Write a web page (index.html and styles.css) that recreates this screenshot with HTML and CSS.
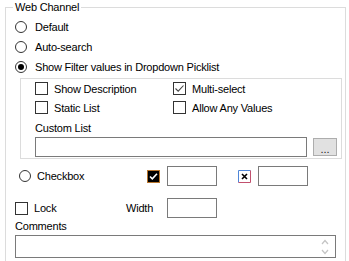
FILE: index.html
```html
<!DOCTYPE html>
<html lang="en">
<head>
    <meta charset="UTF-8">
    <meta name="viewport" content="width=device-width, initial-scale=1.0">
    <title>Web Channel</title>
    <link rel="stylesheet" href="styles.css">
</head>
<body>
    <fieldset class="group">
        <legend>Web Channel</legend>
        <label class="opt"><span class="radio"></span>Default</label>
        <label class="opt"><span class="radio"></span>Auto-search</label>
        <label class="opt"><span class="radio on"></span>Show Filter values in Dropdown Picklist</label>

        <div class="picklist">
            <div class="grid">
                <label class="opt"><span class="check"></span>Show Description</label>
                <label class="opt"><span class="check">
                    <svg width="11" height="11" viewBox="0 0 11 11"><path d="M1.5 5.5 L4.2 8.2 L9.5 2.5" fill="none" stroke="#444" stroke-width="1.1"/></svg>
                </span>Multi-select</label>
                <label class="opt"><span class="check"></span>Static List</label>
                <label class="opt"><span class="check"></span>Allow Any Values</label>
            </div>
            <div class="caption">Custom List</div>
            <div class="custom">
                <div class="field long"></div>
                <button class="browse">...</button>
            </div>
        </div>

        <div class="cb-row">
            <label class="opt"><span class="radio"></span>Checkbox</label>
            <svg class="swatch" width="13" height="13" viewBox="0 0 13 13">
                <rect x="0.5" y="0.5" width="12" height="12" fill="#000" stroke="#b8762e"/>
                <path d="M3 6.5 L5.3 8.8 L10 3.8" fill="none" stroke="#fff" stroke-width="1.6"/>
            </svg>
            <div class="field short"></div>
            <svg class="swatch cross" width="13" height="13" viewBox="0 0 13 13">
                <rect x="0" y="0" width="13" height="13" fill="#fff"/>
                <path d="M0.5 12.5 V0.5 H12.5" fill="none" stroke="#4f86d8"/>
                <path d="M12.5 0.5 V12.5 H0.5" fill="none" stroke="#c2506e"/>
                <path d="M4 4 L9 9 M9 4 L4 9" stroke="#000" stroke-width="1.6"/>
            </svg>
            <div class="field short"></div>
        </div>

        <div class="lock-row">
            <label class="opt"><span class="check"></span>Lock</label>
            <span class="width-label">Width</span>
            <div class="field short"></div>
        </div>

        <div class="caption comments">Comments</div>
        <div class="memo">
            <svg width="8" height="21" viewBox="0 0 8 21">
                <path d="M1 8 L4 4.5 L7 8" fill="none" stroke="#c4c4c4" stroke-width="1.2"/>
                <path d="M1 14 L4 17.5 L7 14" fill="none" stroke="#c4c4c4" stroke-width="1.2"/>
            </svg>
        </div>
    </fieldset>
</body>
</html>
```

FILE: styles.css
```css
* {
    box-sizing: border-box;
}
body {
    margin: 0;
    font-family: "Liberation Sans", Arial, sans-serif;
    font-size: 11px;
    line-height: 14px;
    letter-spacing: -0.2px;
    color: #000;
    background: #fff;
}
.group {
    margin: 0 0 0 5px;
    width: 341px;
    min-width: 0;
    padding: 3px 3px 20px 9px;
    border: 1px solid #dcdcdc;
}
.group legend {
    padding: 0 2px;
    margin-left: -2px;
    line-height: 14px;
}
.opt {
    display: flex;
    align-items: center;
    height: 20px;
    white-space: nowrap;
}
.radio {
    flex: none;
    display: flex;
    align-items: center;
    justify-content: center;
    width: 12px;
    height: 12px;
    margin-right: 8px;
    border: 1px solid #333;
    border-radius: 50%;
    background: #fff;
}
.radio.on::after {
    content: "";
    width: 6px;
    height: 6px;
    border-radius: 50%;
    background: #000;
}
.check {
    flex: none;
    display: flex;
    width: 13px;
    height: 13px;
    margin-right: 6px;
    border: 1px solid #333;
    background: #fff;
}
.picklist {
    margin: 1px 0 0 5px;
    padding: 0 0 1px 14px;
    border: 1px solid #dcdcdc;
}
.grid {
    display: grid;
    grid-template-columns: 138px auto;
    grid-auto-rows: 19px;
}
.grid .opt {
    height: 19px;
}
.caption {
    margin-top: 4px;
}
.custom {
    display: flex;
    align-items: center;
    margin-top: 2px;
}
.field {
    flex: none;
    height: 20px;
    border: 1px solid #7a7a7a;
    background: #fff;
}
.field.long {
    width: 272px;
}
.field.short {
    width: 50px;
}
.browse {
    width: 24px;
    height: 18px;
    margin-left: 6px;
    padding: 3px 0 0;
    border: 1px solid #adadad;
    background: #e1e1e1;
    font: inherit;
    line-height: 12px;
    color: #222;
}
.cb-row {
    display: flex;
    align-items: center;
    height: 20px;
    margin-top: 7px;
}
.cb-row .opt {
    width: 132px;
    padding-left: 4px;
}
.cb-row .radio {
    margin-right: 6px;
}
.swatch {
    flex: none;
    margin-right: 7px;
}
.swatch.cross {
    margin-left: 21px;
}
.lock-row {
    display: flex;
    align-items: center;
    height: 20px;
    margin-top: 12px;
}
.lock-row .opt {
    width: 111px;
}
.width-label {
    width: 41px;
}
.comments {
    margin-top: 1px;
}
.memo {
    display: flex;
    justify-content: flex-end;
    align-items: flex-start;
    width: 321px;
    height: 23px;
    margin-top: 2px;
    padding-right: 6px;
    border: 1px solid #7a7a7a;
    background: #fff;
}
```
